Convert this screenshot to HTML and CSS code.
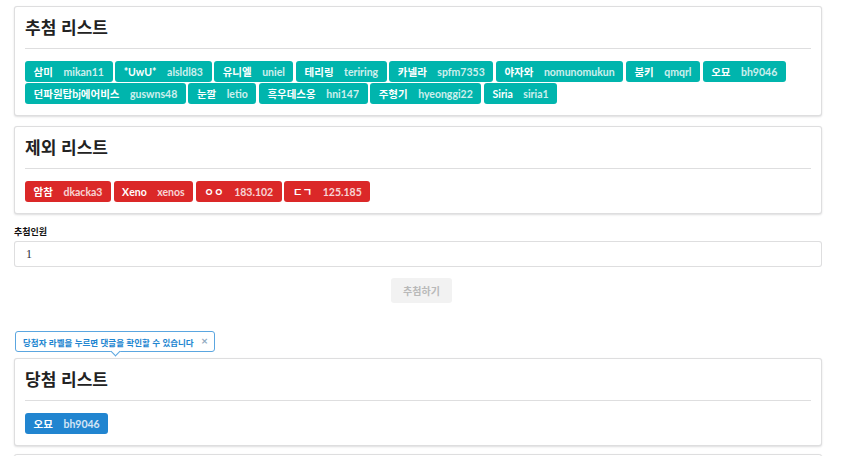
FILE: index.html
```html
<!DOCTYPE html>
<html lang="ko">
<head>
<meta charset="utf-8">
<title>추첨</title>
<link rel="stylesheet" href="styles.css">
</head>
<body>
<div class="page">
  <section class="card">
    <h2 class="card-title">추첨 리스트</h2>
    <div class="labels">
      <span class="label teal">삼미<span class="detail">mikan11</span></span>
      <span class="label teal">*UwU*<span class="detail">alsldl83</span></span>
      <span class="label teal">유니엘<span class="detail">uniel</span></span>
      <span class="label teal">테리링<span class="detail">teriring</span></span>
      <span class="label teal">카넬라<span class="detail">spfm7353</span></span>
      <span class="label teal">야자와<span class="detail">nomunomukun</span></span>
      <span class="label teal">붐키<span class="detail">qmqrl</span></span>
      <span class="label teal">오묘<span class="detail">bh9046</span></span>
      <span class="label teal">던파원탑bj에어비스<span class="detail">guswns48</span></span>
      <span class="label teal">눈깔<span class="detail">letio</span></span>
      <span class="label teal">흑우데스옹<span class="detail">hni147</span></span>
      <span class="label teal">주형기<span class="detail">hyeonggi22</span></span>
      <span class="label teal">Siria<span class="detail">siria1</span></span>
    </div>
  </section>

  <section class="card">
    <h2 class="card-title">제외 리스트</h2>
    <div class="labels">
      <span class="label red">암참<span class="detail">dkacka3</span></span>
      <span class="label red">Χeno<span class="detail">xenos</span></span>
      <span class="label red">ㅇㅇ<span class="detail">183.102</span></span>
      <span class="label red">ㄷㄱ<span class="detail">125.185</span></span>
    </div>
  </section>

  <div class="field">
    <label class="field-label" for="count">추첨인원</label>
    <input class="field-input" id="count" type="text" value="1">
  </div>

  <div class="actions">
    <button class="btn" type="button" disabled>추첨하기</button>
  </div>

  <section class="card winners">
    <div class="tooltip">
      <span class="tooltip-text">당첨자 라벨을 누르면 댓글을 확인할 수 있습니다</span>
      <span class="tooltip-close">×</span>
    </div>
    <h2 class="card-title">당첨 리스트</h2>
    <div class="labels">
      <span class="label blue">오묘<span class="detail">bh9046</span></span>
    </div>
  </section>

  <section class="card empty"></section>
</div>
</body>
</html>
```

FILE: styles.css
```css
* {
  box-sizing: border-box;
}

html, body {
  margin: 0;
  padding: 0;
  background: #ffffff;
}

body {
  font-family: "Lato", "Noto Sans CJK KR", sans-serif;
  color: rgba(0, 0, 0, 0.87);
  overflow: hidden;
  height: 456px;
}

.page {
  padding: 6px 28px 0 14px;
  display: flex;
  flex-direction: column;
}

.card {
  border: 1px solid rgba(34, 36, 38, 0.15);
  border-radius: 3px;
  box-shadow: 0 1px 2px 0 rgba(34, 36, 38, 0.15);
  background: #fff;
  padding: 9px 10px 11px;
  margin-bottom: 10px;
}

.card-title {
  margin: 0;
  font-family: "Noto Sans CJK KR", sans-serif;
  font-size: 17px;
  font-weight: 700;
  line-height: 22px;
  color: #222;
  padding-bottom: 10px;
  border-bottom: 1px solid rgba(34, 36, 38, 0.15);
}

.labels {
  margin-top: 12px;
  display: flex;
  flex-wrap: wrap;
  gap: 1px 2.5px;
}

.label {
  display: inline-flex;
  align-items: center;
  height: 21px;
  padding: 0 8.6px;
  border-radius: 3px;
  font-family: "Lato", "Noto Sans CJK KR", sans-serif;
  font-size: 10.5px;
  font-weight: 700;
  color: #fff;
  white-space: nowrap;
}

.label .detail {
  margin-left: 1em;
  opacity: 0.8;
}

.teal { background: #00b5ad; }
.red { background: #db2828; }
.blue { background: #2185d0; }

.field {
  display: flex;
  flex-direction: column;
  margin-top: 1px;
}

.field-label {
  font-family: "Noto Sans CJK KR", sans-serif;
  font-size: 9px;
  font-weight: 700;
  line-height: 13px;
  color: #111;
  margin-bottom: 3px;
}

.field-input {
  height: 26px;
  width: 100%;
  border: 1px solid rgba(34, 36, 38, 0.15);
  border-radius: 3px;
  padding: 0 11px;
  font-family: "Liberation Serif", serif;
  font-size: 12px;
  color: #2d2d3a;
  background: #fff;
  outline: none;
}

.actions {
  display: flex;
  justify-content: center;
  padding-left: 7px;
  margin-top: 11px;
}

.btn {
  width: 61px;
  height: 25px;
  border: none;
  border-radius: 3px;
  background: #f2f2f2;
  color: #b9b9b9;
  font-family: "Noto Sans CJK KR", sans-serif;
  font-size: 10px;
  font-weight: 700;
  padding: 0;
}

.winners {
  position: relative;
  margin-top: 55px;
  margin-bottom: 8px;
}

.tooltip {
  position: absolute;
  left: 0;
  bottom: calc(100% + 7px);
  height: 21px;
  display: flex;
  align-items: center;
  gap: 7px;
  padding: 0 6px 0 7px;
  border: 1px solid #5ba6e0;
  border-radius: 3px;
  background: #fff;
  white-space: nowrap;
}

.tooltip::after {
  content: "";
  position: absolute;
  left: 50%;
  bottom: -4px;
  width: 6px;
  height: 6px;
  margin-left: -3px;
  background: #fff;
  border-right: 1px solid #5ba6e0;
  border-bottom: 1px solid #5ba6e0;
  transform: rotate(45deg);
}

.tooltip-text {
  font-family: "Noto Sans CJK KR", sans-serif;
  font-size: 8.5px;
  font-weight: 700;
  color: #2185d0;
}

.tooltip-close {
  font-family: "DejaVu Sans", sans-serif;
  font-size: 9px;
  font-weight: 700;
  color: #8fa9c0;
  line-height: 1;
}

.empty {
  height: 40px;
}
```
